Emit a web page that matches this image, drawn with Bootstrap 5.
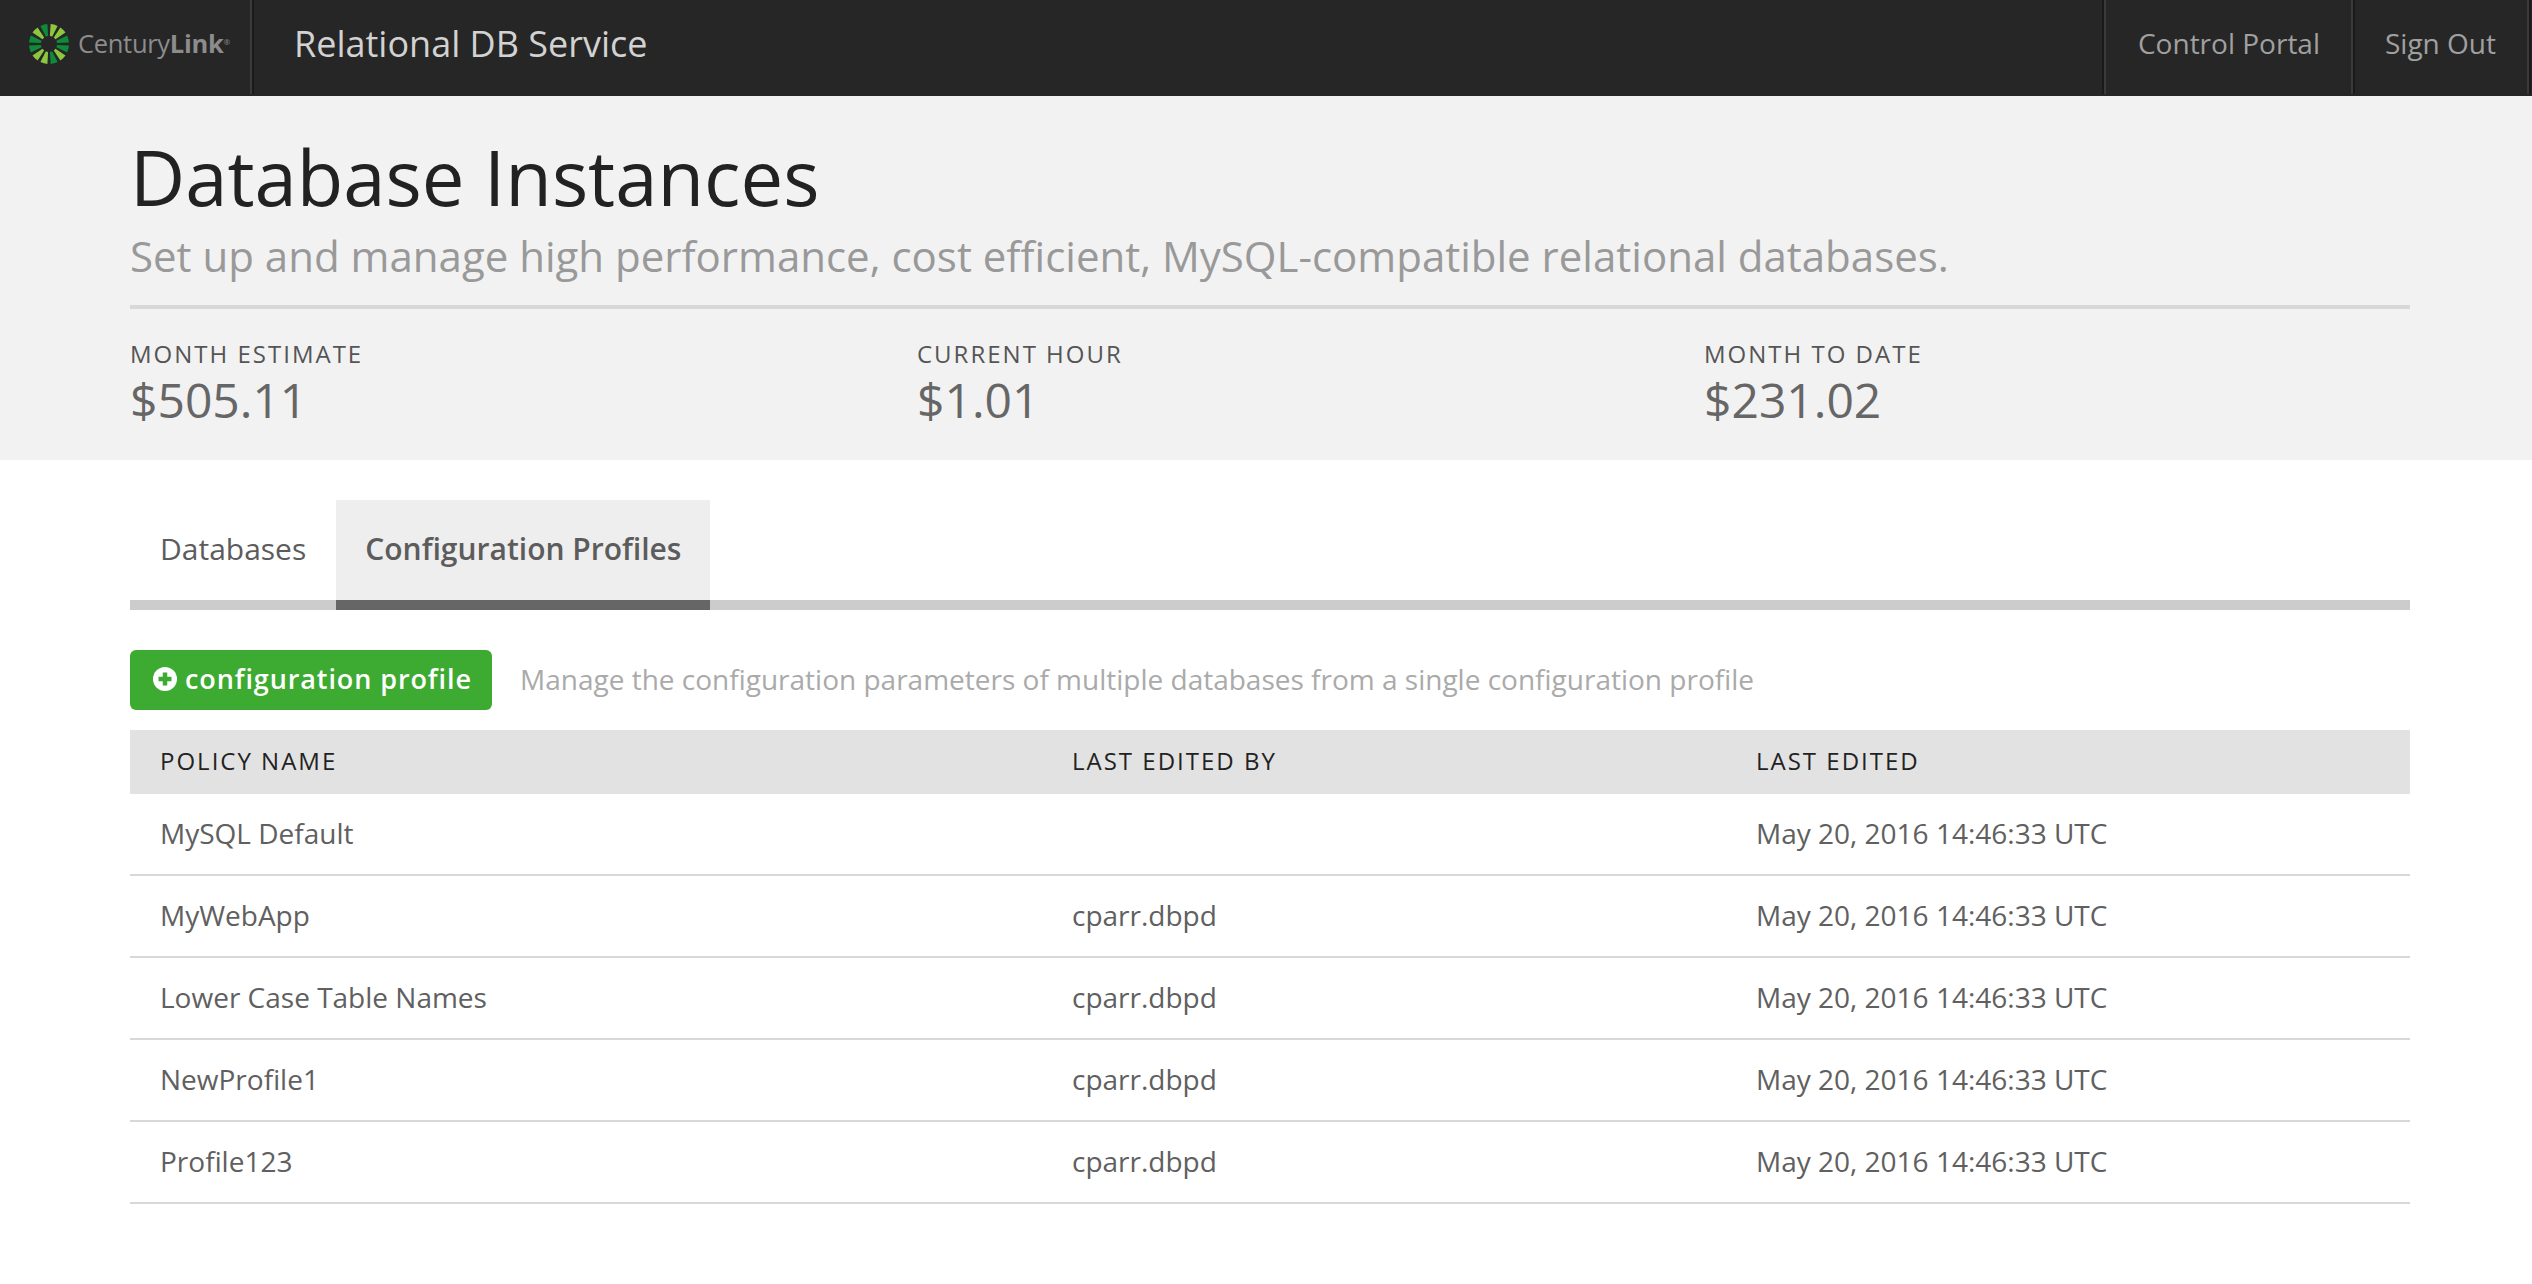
<!DOCTYPE html>
<html>
<head>
  <title>Database Instances</title>
  <link rel="stylesheet" href="https://cdn.jsdelivr.net/npm/bootstrap@5.3.0/dist/css/bootstrap.min.css">
  <style>
    body { font-family: "Open Sans", sans-serif; color: #555; background: #fff; }

    /* top bar */
    .topbar { background: #262626; height: 96px; padding: 0 3px 2px 0; }
    .topbar-cell { height: 94px; display: flex; align-items: center; padding-bottom: 8px; border-right: 2px solid #3a3a3a; box-shadow: 2px 0 0 #1a1a1a; }
    .brand-cell { width: 252px; padding-left: 28px; padding-bottom: 6px; gap: 8px; }
    .brand-text { font-size: 25.5px; color: #8c8c8c; letter-spacing: -0.3px; line-height: 1; white-space: nowrap; }
    .brand-text b { font-weight: 700; }
    .brand-text i { font-size: 8px; font-style: normal; vertical-align: 8px; }
    .app-name { font-size: 36px; color: #d2d2d2; padding-left: 42px; padding-bottom: 6px; }
    .top-link { font-size: 28px; color: #a0a0a0; text-decoration: none; padding: 0 31px 0 32px; }
    .top-link-first { border-left: 2px solid #3a3a3a; box-shadow: -2px 0 0 #1a1a1a, 2px 0 0 #1a1a1a; }

    /* header band */
    .page-band { background: #f2f2f2; height: 364px; padding: 0 122px 0 130px; }
    .page-title { font-size: 76px; font-weight: 400; color: #222; line-height: 104px; margin: 0; padding-top: 29px; }
    .page-sub { font-size: 42px; color: #999; line-height: 54px; padding-bottom: 22px; border-bottom: 4px solid #d8d8d8; }
    .stat-row { margin-top: 29px; }
    .stat-col { width: 787px; flex-shrink: 0; }
    .stat-label { font-size: 24px; letter-spacing: 2px; color: #555; line-height: 32px; }
    .stat-value { font-size: 48px; color: #666; line-height: 59px; }

    /* tabs */
    .tab-strip { margin: 40px 122px 0 130px; border-bottom: 10px solid #ccc; height: 110px; }
    .tab-item { height: 110px; padding: 26px 30px 0; font-size: 30px; color: #5c5c5c; text-decoration: none; margin-bottom: -10px; border-bottom: 10px solid transparent; }
    .tab-on { background: #eee; font-weight: 600; border-bottom-color: #666; padding: 26px 29px 0; }

    /* toolbar */
    .tool-row { margin: 40px 122px 20px 130px; height: 60px; }
    .add-btn { background: #3dab32; color: #fff; font-size: 27px; font-weight: 600; letter-spacing: 0.9px; height: 60px; width: 362px; padding: 0 0 2px 23px; border: 0; border-radius: 6px; white-space: nowrap; }
    .add-btn:hover { background: #3dab32; color: #fff; }
    .tool-hint { font-size: 28px; color: #aaa; margin-left: 28px; padding-bottom: 2px; }

    /* table */
    .profile-wrap { margin: 0 122px 0 130px; }
    .profile-table { margin: 0; table-layout: fixed; width: 100%; border-collapse: separate; border-spacing: 0; }
    .profile-table th { background: #e2e2e2; font-size: 24px; font-weight: 400; letter-spacing: 2px; color: #222; height: 64px; padding: 0 30px 2px; vertical-align: middle; border: 0; }
    .profile-table td { font-size: 28px; color: #606060; height: 82px; padding: 0 30px 3px; vertical-align: middle; border-bottom: 2px solid #d8d8d8; }
    .profile-table .first-col { width: 912px; }
    .profile-table .second-col { width: 684px; }
  </style>
</head>
<body>

  <!-- top bar -->
  <nav class="topbar d-flex justify-content-between">
    <div class="d-flex">
      <div class="topbar-cell brand-cell">
        <svg width="42" height="42" viewBox="-21 -21 42 42">
          <defs><path id="ray" d="M-1.2-8 1.2-8 3.6-19.7A20 20 0 0 0-3.6-19.7Z"/></defs>
          <use href="#ray" fill="#8ec63f" transform="rotate(15)"/>
          <use href="#ray" fill="#8ec63f" transform="rotate(45)"/>
          <use href="#ray" fill="#0d8a3a" transform="rotate(75)"/>
          <use href="#ray" fill="#0d8a3a" transform="rotate(105)"/>
          <use href="#ray" fill="#8ec63f" transform="rotate(135)"/>
          <use href="#ray" fill="#0d8a3a" transform="rotate(165)"/>
          <use href="#ray" fill="#8ec63f" transform="rotate(195)"/>
          <use href="#ray" fill="#8ec63f" transform="rotate(225)"/>
          <use href="#ray" fill="#0d8a3a" transform="rotate(255)"/>
          <use href="#ray" fill="#0d8a3a" transform="rotate(285)"/>
          <use href="#ray" fill="#8ec63f" transform="rotate(315)"/>
          <use href="#ray" fill="#0d8a3a" transform="rotate(345)"/>
        </svg>
        <span class="brand-text">Century<b>Link</b><i>®</i></span>
      </div>
      <div class="app-name d-flex align-items-center">Relational DB Service</div>
    </div>
    <div class="d-flex">
      <div class="topbar-cell top-link-first"><a class="top-link" href="#">Control Portal</a></div>
      <div class="topbar-cell"><a class="top-link" href="#">Sign Out</a></div>
    </div>
  </nav>

  <!-- page header -->
  <div class="page-band">
    <h1 class="page-title">Database Instances</h1>
    <div class="page-sub">Set up and manage high performance, cost efficient, MySQL-compatible relational databases.</div>
    <div class="d-flex stat-row">
      <div class="stat-col">
        <div class="stat-label">MONTH ESTIMATE</div>
        <div class="stat-value">$505.11</div>
      </div>
      <div class="stat-col">
        <div class="stat-label">CURRENT HOUR</div>
        <div class="stat-value">$1.01</div>
      </div>
      <div class="stat-col">
        <div class="stat-label">MONTH TO DATE</div>
        <div class="stat-value">$231.02</div>
      </div>
    </div>
  </div>

  <!-- tabs -->
  <div class="tab-strip d-flex">
    <a class="tab-item" href="#">Databases</a>
    <a class="tab-item tab-on" href="#">Configuration Profiles</a>
  </div>

  <!-- add button and hint -->
  <div class="tool-row d-flex align-items-center">
    <button class="btn add-btn d-flex align-items-center gap-2" type="button">
      <svg width="24" height="24" viewBox="0 0 24 24"><circle cx="12" cy="12" r="12" fill="#fff"/><path d="M12 5.5v13M5.5 12h13" stroke="#3dab32" stroke-width="4.5"/></svg>
      configuration profile
    </button>
    <span class="tool-hint">Manage the configuration parameters of multiple databases from a single configuration profile</span>
  </div>

  <!-- profiles -->
  <div class="profile-wrap">
    <table class="table profile-table">
      <thead>
        <tr>
          <th class="first-col">POLICY NAME</th>
          <th class="second-col">LAST EDITED BY</th>
          <th>LAST EDITED</th>
        </tr>
      </thead>
      <tbody>
        <tr><td>MySQL Default</td><td></td><td>May 20, 2016 14:46:33 UTC</td></tr>
        <tr><td>MyWebApp</td><td>cparr.dbpd</td><td>May 20, 2016 14:46:33 UTC</td></tr>
        <tr><td>Lower Case Table Names</td><td>cparr.dbpd</td><td>May 20, 2016 14:46:33 UTC</td></tr>
        <tr><td>NewProfile1</td><td>cparr.dbpd</td><td>May 20, 2016 14:46:33 UTC</td></tr>
        <tr><td>Profile123</td><td>cparr.dbpd</td><td>May 20, 2016 14:46:33 UTC</td></tr>
      </tbody>
    </table>
  </div>

  <script src="https://cdn.jsdelivr.net/npm/bootstrap@5.3.0/dist/js/bootstrap.bundle.min.js"></script>
</body>
</html>
